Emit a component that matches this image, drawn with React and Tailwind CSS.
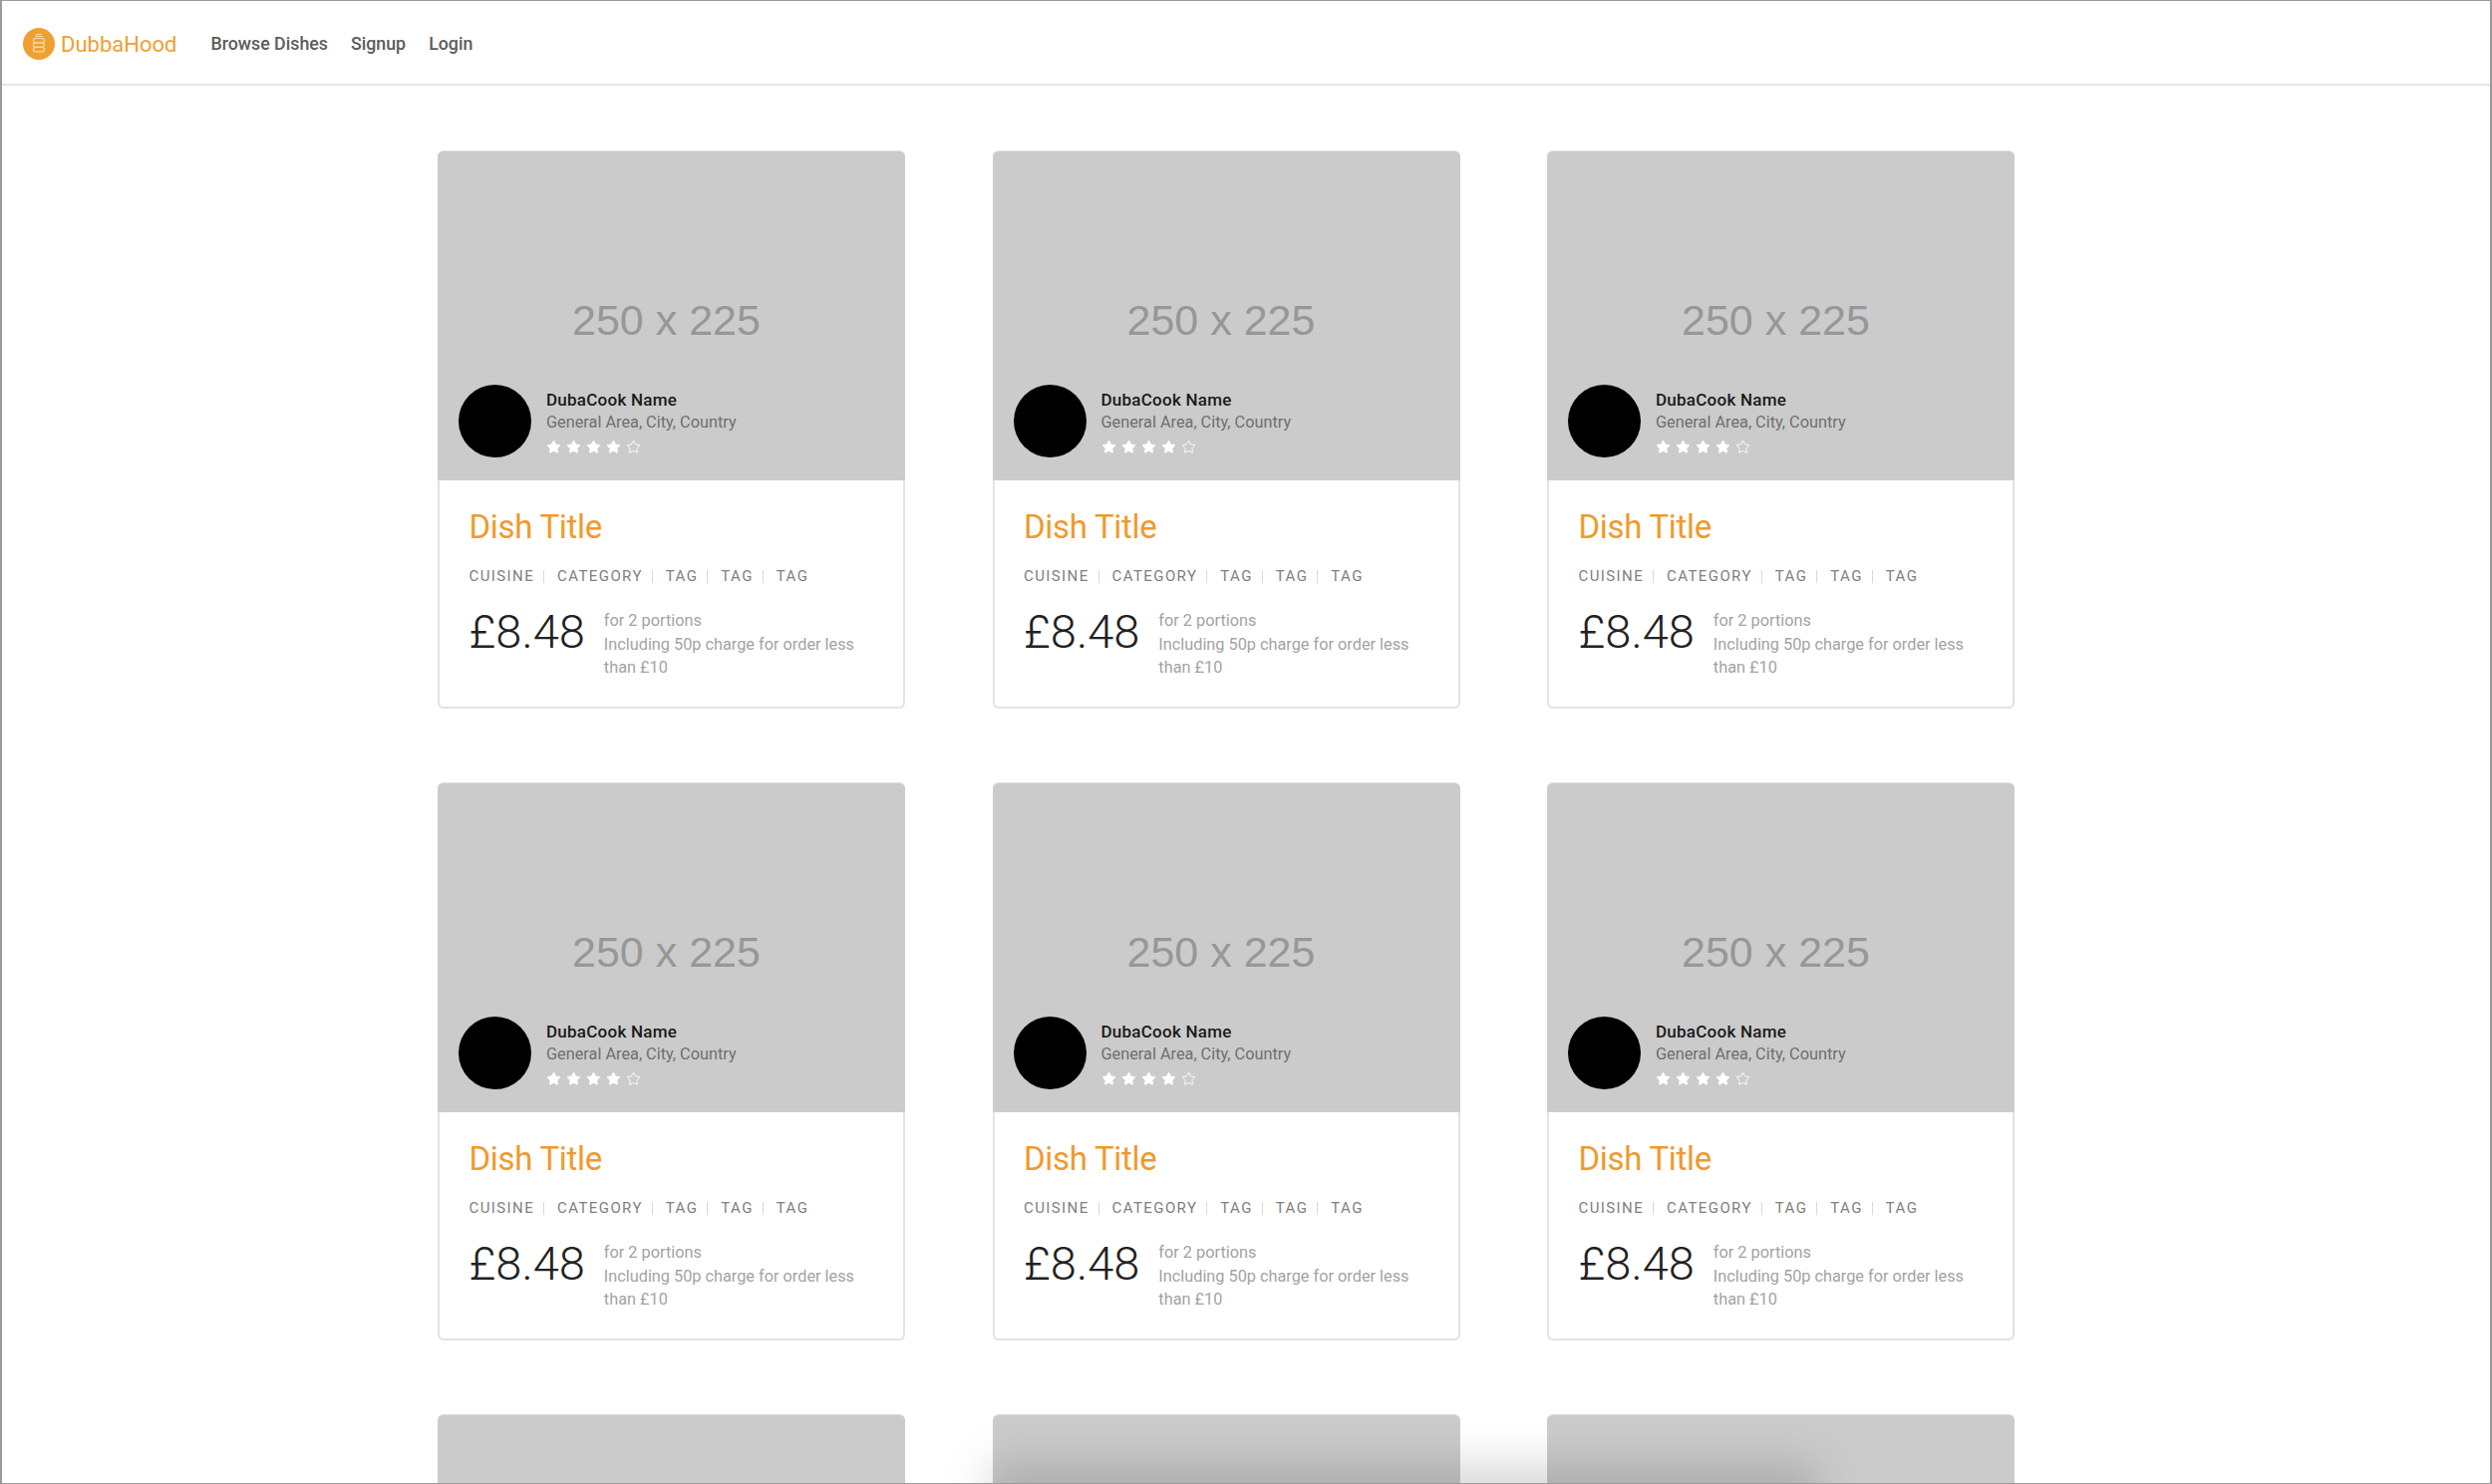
import { Star } from "lucide-react";

const DishLogo = () => (
  <svg width="32" height="32" viewBox="0 0 32 32" className="shrink-0">
    <circle cx="16" cy="16" r="16" fill="#f0a030" />
    <g fill="none" stroke="#fbd9a6" strokeWidth="1.2">
      <path d="M13 6.5h6M12 8.5h8" />
      <rect x="10.5" y="10.5" width="11" height="4.4" rx="2.2" />
      <rect x="10.5" y="14.9" width="11" height="4.4" rx="2.2" />
      <rect x="10.5" y="19.3" width="11" height="4.6" rx="2.3" />
    </g>
  </svg>
);

const tags = ["CUISINE", "CATEGORY", "TAG", "TAG", "TAG"];

const DishCard = () => (
  <div className="flex h-[560px] flex-col rounded-md bg-white">
    <div className="flex h-[331px] shrink-0 flex-col rounded-t-md border-t border-[#dedede] bg-[#cbcbcb]">
      <p className="pl-[135px] pt-[146px] font-['Liberation_Sans',sans-serif] text-[43px] leading-[46px] text-[#979797]">
        250 x 225
      </p>
      <div className="mt-auto flex items-center gap-[15px] pb-[23px] pl-[21px]">
        <div className="h-[73px] w-[73px] rounded-full bg-black" />
        <div>
          <p className="text-[17px] font-medium leading-[23px] tracking-[0.25px] text-[#1a1a1a]">DubaCook Name</p>
          <p className="text-[16.3px] leading-[21px] text-[#6f6f6f]">General Area, City, Country</p>
          <div className="mt-[7px] flex gap-[5px]">
            {[0, 1, 2, 3, 4].map((i) => (
              <Star key={i} size={15} strokeWidth={1.5} className="text-white" fill={i < 4 ? "white" : "none"} />
            ))}
          </div>
        </div>
      </div>
    </div>
    <div className="flex-1 rounded-b-md border-x-2 border-b-2 border-[#e3e3e3] pl-[29.5px] pr-[28px] pt-[27px]">
      <h2 className="text-[33px] leading-[40px] tracking-[-0.3px] text-[#ef9a2d]">Dish Title</h2>
      <div className="mt-[20px] flex items-center text-[15px] leading-[18px] tracking-[1.4px] text-[#808080]">
        {tags.map((tag, i) => (
          <span key={i} className="flex items-center">
            {tag}
            {i < tags.length - 1 && <span className="ml-[9px] mr-[13px] h-[13px] w-px bg-[#d9d9d9]" />}
          </span>
        ))}
      </div>
      <div className="mt-[22px] flex gap-[19px]">
        <p className="text-[47px] font-light leading-[49px] text-[#222222]">£8.48</p>
        <p className="pt-[2px] text-[16.3px] leading-[23.7px] text-[#a3a3a3]">
          for 2 portions
          <br />
          Including 50p charge for order less than £10
        </p>
      </div>
    </div>
  </div>
);

export default function App() {
  return (
    <div className="relative h-[1489px] overflow-hidden border-x-2 border-y border-[#9a9a9a] bg-white font-['Roboto',sans-serif]">
      <nav className="flex h-[85px] items-center border-b-2 border-[#e6e6e6] pl-[21px] pt-[3px]">
        <DishLogo />
        <span className="ml-[6px] text-[22px] text-[#f0a030]">DubbaHood</span>
        <div className="ml-[34px] flex gap-[23px] text-[17.8px] font-medium text-[#5c5c5c]">
          <a>Browse Dishes</a>
          <a>Signup</a>
          <a>Login</a>
        </div>
      </nav>
      <main className="grid grid-cols-[repeat(3,469px)] gap-x-[87.5px] gap-y-[74px] pl-[437px] pt-[65px]">
        {Array.from({ length: 9 }).map((_, i) => (
          <DishCard key={i} />
        ))}
      </main>
      <div className="absolute -bottom-[30px] left-[990px] h-[50px] w-[830px] bg-black/15 blur-[20px]" />
    </div>
  );
}
